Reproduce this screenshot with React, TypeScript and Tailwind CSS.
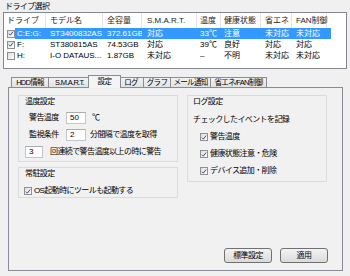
import React from "react";

// 全角文字を少し詰める
const jp = "tracking-[-0.6px]";

const cols = [
	{ title: "ドライブ", cls: "w-[42px] pl-[3px]" },
	{ title: "モデル名", cls: "w-[57px] pl-[4px]" },
	{ title: "全容量", cls: "w-[39px] pl-[4px]" },
	{ title: "S.M.A.R.T.", cls: "w-[55px] pl-[5px]" },
	{ title: "温度", cls: "w-[24px] pl-[3px]" },
	{ title: "健康状態", cls: "w-[40px] pl-[3px]" },
	{ title: "省エネ", cls: "w-[31px] pl-[4px]" },
	{ title: "FAN制御", cls: "w-[35px] pl-[4px]" },
];

const drives = [
	{ on: true, sel: true, cells: ["C:E:G:", "ST3400832AS", "372.61GB", "対応", "33℃", "注意", "未対応", "未対応"] },
	{ on: true, sel: false, cells: ["F:", "ST380815AS", "74.53GB", "対応", "39℃", "良好", "対応", "対応"] },
	{ on: false, sel: false, cells: ["H:", "I-O DATAUS...", "1.87GB", "未対応", "–", "不明", "未対応", "未対応"] },
];

const tabs = [
	{ label: "HDD情報", cls: "w-[38px]" },
	{ label: "S.M.A.R.T.", cls: "w-[43px] -ml-px" },
	{ label: "設定", cls: "w-[33px] -ml-[3px]", active: true },
	{ label: "ログ", cls: "w-[26px] -ml-[3px]" },
	{ label: "グラフ", cls: "w-[28px] -ml-px" },
	{ label: "メール通知", cls: "w-[41px] -ml-px" },
	{ label: "省エネ/FAN制御", cls: "w-[57px] -ml-px" },
];

const Check = ({ on }: { on: boolean }) => (
	<span className="flex w-[8px] h-[8px] shrink-0 items-center justify-center border border-[#8f8f8f] bg-gradient-to-br from-[#dedede] to-white">
		{on && (
			<svg viewBox="0 0 8 8" className="w-[7px] h-[7px]">
				<path d="M1.2 4.2 L3.2 6.2 L6.8 1.4" stroke="#294a8c" strokeWidth="1.3" fill="none" />
			</svg>
		)}
	</span>
);

const Field = ({ value, cls }: { value: string; cls: string }) => (
	<div className={`h-[12px] shrink-0 border border-[#c2c6cd] border-t-[#abadb3] bg-white pl-[3px] leading-[10px] ${cls}`}>
		{value}
	</div>
);

const Button = ({ label }: { label: string }) => (
	<button className="w-[48px] h-[15px] rounded-[3px] border border-[#707070] bg-gradient-to-b from-[#f3f3f3] to-[#dadada] text-[8px] leading-[13px] tracking-[-0.6px]">
		{label}
	</button>
);

export default function App() {
	return (
		<div className="w-[350px] h-[276px] overflow-hidden bg-[#f0f0f0] text-[8px] text-black font-['Liberation_Sans','Noto_Sans_CJK_JP',sans-serif]">
			<div className={`h-[12px] pl-[5px] pt-[1px] leading-[11px] ${jp}`}>ドライブ選択</div>

			{/* ドライブ一覧 */}
			<div className="ml-[3px] w-[344px] h-[57px] border border-[#828790] bg-white">
				<div className="flex h-[15px] leading-[15px] text-[#1e1e1e]">
					{cols.map((c) => (
						<div key={c.title} className={`${c.cls} shrink-0 border-r border-[#e3e5e8] whitespace-nowrap`}>
							{c.title}
						</div>
					))}
				</div>
				{drives.map((d, i) => (
					<div key={i} className="flex h-[11px] leading-[11px] whitespace-nowrap">
						<div className="flex w-[11px] shrink-0 items-center pl-[3px]">
							<Check on={d.on} />
						</div>
						<div className={`flex w-[316px] ${d.sel ? "bg-[#3399ff] text-white" : ""}`}>
							{d.cells.map((v, j) => (
								<div key={j} className={`${j === 0 ? "w-[31px] pl-[2px]" : cols[j].cls} shrink-0 overflow-hidden`}>
									{v}
								</div>
							))}
						</div>
					</div>
				))}
			</div>

			{/* タブ */}
			<div className="ml-[8px] mt-[6px] w-[335px]">
				<div className="flex h-[12px] items-end pl-[3px] text-[7.5px]">
					{tabs.map((t) =>
						t.active ? (
							<div
								key={t.label}
								className={`${t.cls} relative z-10 -mb-px h-[13px] shrink-0 border border-b-0 border-[#898c95] bg-[#f4f4f4] text-center leading-[12px] whitespace-nowrap ${jp}`}
							>
								{t.label}
							</div>
						) : (
							<div
								key={t.label}
								className={`${t.cls} h-[10px] shrink-0 overflow-hidden border border-b-0 border-[#898c95] bg-gradient-to-b from-[#f2f2f2] to-[#e2e2e2] text-center leading-[10px] whitespace-nowrap tracking-[-0.7px]`}
							>
								{t.label}
							</div>
						)
					)}
				</div>

				<div className="flex h-[184px] flex-col border border-[#898c95] bg-[#f1f1f1] pl-[9px] pt-[7px] pr-[14px] pb-[7px]">
					<div className="flex gap-[9px]">
						<div className="flex w-[160px] flex-col gap-[5px]">
							{/* 温度設定 */}
							<div className="h-[67px] border border-[#d9dcdf] pt-[1px] pb-[4px]">
								<div className={`h-[10px] pl-[6px] leading-[10px] ${jp}`}>温度設定</div>
								<div className="mt-[5px] flex h-[12px] items-center pl-[10px] leading-[10px]">
									<span className={`w-[37px] ${jp}`}>警告温度</span>
									<Field value="50" cls="w-[20px]" />
									<span className="ml-[6px]">℃</span>
								</div>
								<div className="mt-[5px] flex h-[12px] items-center pl-[10px] leading-[10px]">
									<span className={`w-[37px] ${jp}`}>監視条件</span>
									<Field value="2" cls="w-[20px]" />
									<span className={`ml-[4px] ${jp}`}>分間隔で温度を取得</span>
								</div>
								<div className="mt-[5px] flex h-[12px] items-center pl-[6px] leading-[10px]">
									<Field value="3" cls="w-[18px]" />
									<span className={`ml-[7px] ${jp}`}>回連続で警告温度以上の時に警告</span>
								</div>
							</div>

							{/* 常駐設定 */}
							<div className="h-[31px] border border-[#d9dcdf] pt-[1px]">
								<div className={`h-[10px] pl-[6px] leading-[10px] ${jp}`}>常駐設定</div>
								<div className="mt-[7px] flex h-[10px] items-center gap-[2px] pl-[5px] leading-[10px]">
									<Check on />
									<span className={jp}>OS起動時にツールも起動する</span>
								</div>
							</div>
						</div>

						{/* ログ設定 */}
						<div className="h-[87px] w-[140px] border border-[#d9dcdf] pt-[1px] pl-[5px]">
							<div className={`h-[10px] leading-[10px] ${jp}`}>ログ設定</div>
							<div className={`mt-[8px] h-[10px] leading-[10px] ${jp}`}>チェックしたイベントを記録</div>
							{["警告温度", "健康状態注意・危険", "デバイス追加・削除"].map((s) => (
								<div key={s} className="mt-[7px] flex h-[10px] items-center gap-[2px] pl-[7px] leading-[10px] first-of-type:mt-[8px]">
									<Check on />
									<span className={jp}>{s}</span>
								</div>
							))}
						</div>
					</div>

					<div className="mt-auto flex justify-end gap-[8px]">
						<Button label="標準設定" />
						<Button label="適用" />
					</div>
				</div>
			</div>
		</div>
	);
}
